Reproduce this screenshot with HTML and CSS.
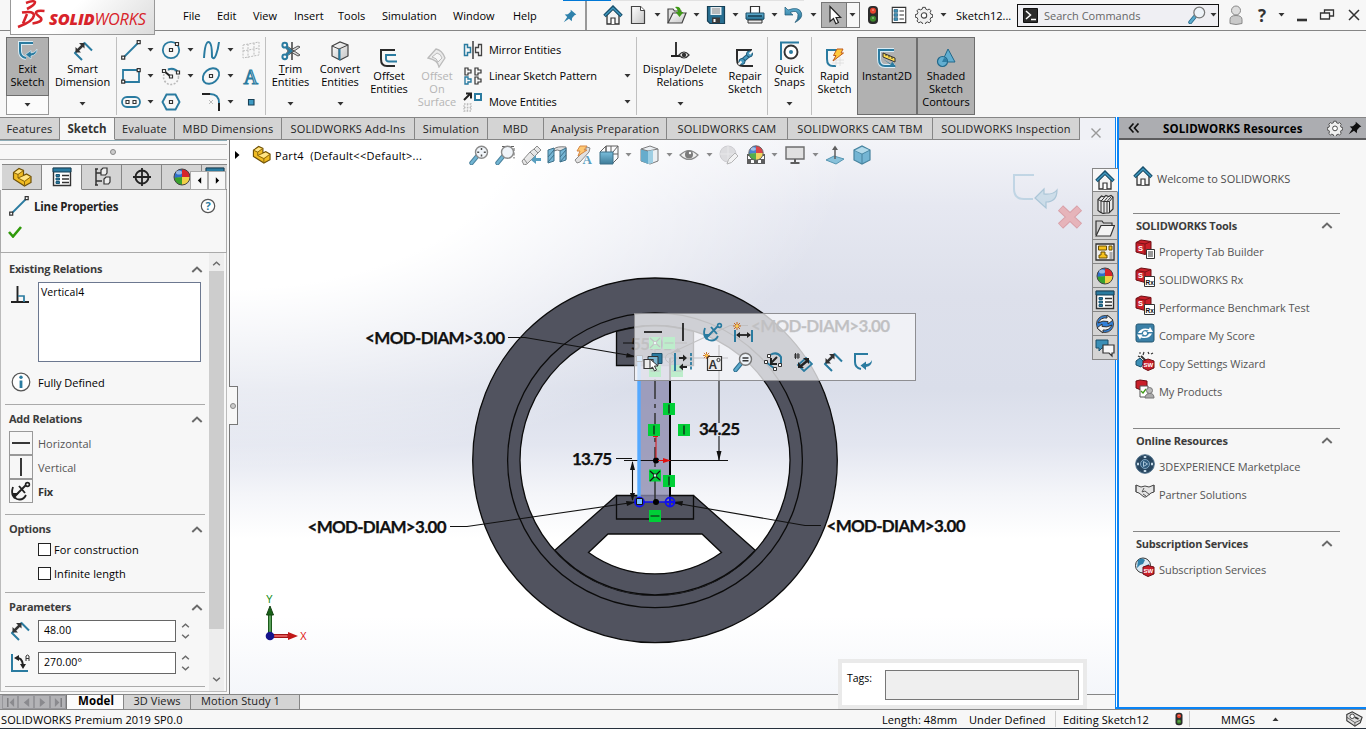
FILE: index.html
```html
<!DOCTYPE html>
<html lang="en">
<head>
<meta charset="utf-8">
<title>SOLIDWORKS Premium 2019</title>
<link rel="stylesheet" href="styles.css">
</head>
<body>
<svg class="defs" aria-hidden="true">
  <defs>
    <linearGradient id="gBlue" x1="0" y1="0" x2="0" y2="1"><stop offset="0" stop-color="#63b3d6"/><stop offset="1" stop-color="#1f6788"/></linearGradient>
    <linearGradient id="gGrey" x1="0" y1="0" x2="1" y2="1"><stop offset="0" stop-color="#fff"/><stop offset="1" stop-color="#c4c4c4"/></linearGradient>
    <clipPath id="ballClip"><circle cx="10" cy="10" r="8"/></clipPath>
  </defs>
  <symbol id="arr" viewBox="0 0 7 4"><path d="M.5 0h6L3.5 3.6z" fill="#333"/></symbol>
  <symbol id="chev" viewBox="0 0 12 7"><path d="M1.300 6L6 1.600 10.700 6" fill="none" stroke="#6a6a6a" stroke-width="2"/></symbol>
  <symbol id="home" viewBox="0 0 20 20"><path d="M4 10v9h12v-9l-6-6z" fill="#f4f4f4" stroke="#333" stroke-width="1.300"/><path d="M8 19v-6h4v6" fill="#fff" stroke="#333" stroke-width="1.200"/><path d="M1.500 11L10 2.500l8.500 8.500" fill="none" stroke="#174f6c" stroke-width="3.600"/><path d="M2 10.600L10 2.900l8 7.700" fill="none" stroke="#3f96bd" stroke-width="1.400"/></symbol>
  <symbol id="new" viewBox="0 0 20 20"><path d="M3.500 1.500h9l4 4v13h-13z" fill="url(#gGrey)" stroke="#444" stroke-width="1.200"/><path d="M12.500 1.500v4h4" fill="#fff" stroke="#444"/></symbol>
  <symbol id="open" viewBox="0 0 20 20"><path d="M1 18V4h5l1.500 2H14v3" fill="#ddd" stroke="#444" stroke-width="1.200"/><path d="M1 18L6 8h13l-4 10z" fill="url(#gGrey)" stroke="#444" stroke-width="1.200"/><path d="M8 2q6-1 6 5h2.500L12.500 12 8.500 7H11q0-3-3-5z" fill="#3f9a16"/></symbol>
  <symbol id="save" viewBox="0 0 20 20"><path d="M1.500 1.500h17v17H4l-2.500-2.500z" fill="#286f92" stroke="#163f55" stroke-width="1.200"/><path d="M4.500 2h11v8h-11z" fill="#e7eef2"/><path d="M6 4h8M6 6h8M6 8h8" stroke="#888"/><path d="M6 12.500h8V18H6z" fill="#3b3b3b"/><path d="M7.500 14h2v3h-2z" fill="#fff"/></symbol>
  <symbol id="print" viewBox="0 0 20 20"><path d="M5.500 1.500h9v7h-9z" fill="#fff" stroke="#333" stroke-width="1.200"/><path d="M1 8h18v6l-2 1H3l-2-1z" fill="url(#gBlue)" stroke="#1b4d66"/><path d="M3 15h14v3H3z" fill="#e9e9e9" stroke="#333"/><path d="M3 11h14" stroke="#153d50" stroke-width="1.500"/></symbol>
  <symbol id="undo" viewBox="0 0 20 20"><path d="M1 2v8h8L6 7.500q7-3 8 2 .5 4-3 8 8-4 6.500-9.500Q15 1 4 5z" fill="url(#gBlue)" stroke="#1d5876" stroke-width=".7"/></symbol>
  <symbol id="cursor" viewBox="0 0 20 20"><path d="M6 1.500v15l3.500-3 2.300 5.200 2.600-1.200-2.300-5h4.500z" fill="#fff" stroke="#222" stroke-width="1.200"/></symbol>
  <symbol id="light" viewBox="0 0 20 20"><rect x="5" y="1" width="10" height="18" rx="4" fill="#2c2c2c"/><circle cx="10" cy="5.800" r="3" fill="#e8432d"/><circle cx="10" cy="13.800" r="3" fill="#3e8a2c"/><path d="M9 5h2M9 13h2" stroke="#fff" opacity=".6"/></symbol>
  <symbol id="list" viewBox="0 0 20 20"><path d="M2.500 1.500h15v17h-15z" fill="#fff" stroke="#333" stroke-width="1.200"/><path d="M4.500 4h4v3h-4zm0 4.500h4v3h-4zm0 4.500h4v3h-4z" fill="#3f94ba" stroke="#1d5876" stroke-width=".8"/><path d="M10.500 5.500h5M10.500 10h5M10.500 14.500h5" stroke="#333" stroke-width="1.200"/></symbol>
  <symbol id="gear" viewBox="0 0 20 20"><path d="M8.500 1.500h3l.5 2 2 .8 1.800-1 2 2-1 1.900.8 1.900 2 .4v3l-2 .5-.8 1.900 1 1.800-2 2-1.800-1-2 .8-.5 2h-3l-.5-2-2-.8-1.800 1-2-2 1-1.800-.8-1.900-2-.5v-3l2-.4.8-1.900-1-1.900 2-2 1.800 1 2-.8z" fill="#f0f0f0" stroke="#444" stroke-width="1.100"/><circle cx="10" cy="10.500" r="3" fill="#fff" stroke="#444" stroke-width="1.200"/></symbol>
  <symbol id="pin" viewBox="0 0 20 20"><path d="M11 1l8 7-2.500 1L13 13l-.5 4.500-4-3.500L1 19l5-7.500L2.500 8 7 7.500l4-3.500z" fill="#2f82ac"/></symbol>
  <symbol id="mag" viewBox="0 0 20 20"><path d="M2.500 18l5-6" stroke="#2c6d8d" stroke-width="4.500" stroke-linecap="round"/><path d="M2.500 18l5-6" stroke="#5aa9cc" stroke-width="2.600" stroke-linecap="round"/><circle cx="12.500" cy="7.300" r="6" fill="#eef3f8" stroke="#777" stroke-width="1.400"/></symbol>
  <symbol id="user" viewBox="0 0 20 20"><path d="M4 18.500v-4q0-4 6-4t6 4v4q-6 2-12 0z" fill="#c9c9c9" stroke="#888"/><circle cx="10" cy="5.500" r="4.500" fill="#ddd" stroke="#888"/></symbol>
  <symbol id="exit" viewBox="0 0 20 20"><path d="M15 2H2v8q0 6 6 7" fill="none" stroke="#2a7ba0" stroke-width="2"/><path d="M19 8q0 6-6 7v3l-5.500-4.500L13 9.500v2.500q4 0 6-4z" fill="#2a7ba0"/></symbol>
  <symbol id="exitB" viewBox="0 0 20 20"><path d="M15 2H2v8q0 6 6 7" fill="none" stroke="#d9ecf5" stroke-width="4"/><path d="M15 2H2v8q0 6 6 7" fill="none" stroke="#2a7ba0" stroke-width="2"/><path d="M19 8q0 6-6 7v3l-5.500-4.500L13 9.500v2.500q4 0 6-4z" fill="#2a7ba0" stroke="#d9ecf5" stroke-width=".7"/></symbol>
  <symbol id="dim" viewBox="0 0 20 20"><path d="M1.500 11.500l7.500 7.500M11.500 2l7.500 7.500M1.500 12.500l2-2M10 3.500l2-2" fill="none" stroke="#2a7ba0" stroke-width="2"/><path d="M4 10l6-6" stroke="#333" stroke-width="2.500"/><path d="M2.500 11.500V6l5.500 5.500zM11.500 2v5.500L6 2z" fill="#333"/></symbol>
  <symbol id="line" viewBox="0 0 20 20"><path d="M2 18L18 2" stroke="#2a7ba0" stroke-width="1.800"/><path d="M.7 16.200h3v3h-3zM16.200.7h3v3h-3z" fill="#fff" stroke="#333" stroke-width="1.200"/></symbol>
  <symbol id="circ" viewBox="0 0 20 20"><circle cx="10" cy="10" r="8.200" fill="none" stroke="#2a7ba0" stroke-width="1.800"/><path d="M8.500 8.500h3v3h-3zM14.500 2.500h3v3h-3z" fill="#fff" stroke="#333" stroke-width="1.200"/></symbol>
  <symbol id="spline" viewBox="0 0 20 20"><path d="M3 18Q4 2 7.500 2T11 17q2 3 4-2T18 2" fill="none" stroke="#2a7ba0" stroke-width="2"/></symbol>
  <symbol id="gridp" viewBox="0 0 20 20"><path d="M2 5l16-3v13L2 18zM7 4v14M13 3v13M2 11l16-3" fill="none" stroke="#bbb" stroke-dasharray="2 1.200"/></symbol>
  <symbol id="rect" viewBox="0 0 20 20"><path d="M2 4h16v12H2z" fill="none" stroke="#2a7ba0" stroke-width="1.800"/><path d="M.7 14.200h3v3h-3zM16.200 2.700h3v3h-3z" fill="#fff" stroke="#333" stroke-width="1.200"/></symbol>
  <symbol id="arc" viewBox="0 0 20 20"><circle cx="10" cy="11" r="7.500" fill="none" stroke="#bbb" stroke-width="1.600" stroke-dasharray="2 1.500"/><path d="M7 3.500Q13 1 17 6" fill="none" stroke="#2a7ba0" stroke-width="1.900"/><path d="M3 5l6 5" fill="none" stroke="#222" stroke-width="2"/><path d="M8.500 9h3v3h-3zM1.500 3.500h3v3h-3zM15.500 5h3v3h-3z" fill="#fff" stroke="#333" stroke-width="1.200"/></symbol>
  <symbol id="ell" viewBox="0 0 20 20"><ellipse cx="10" cy="10" rx="9" ry="6.800" transform="rotate(-40 10 10)" fill="none" stroke="#2a7ba0" stroke-width="1.900"/><path d="M8.500 8.500h3v3h-3z" fill="#fff" stroke="#333" stroke-width="1.200"/></symbol>
  <symbol id="slot" viewBox="0 0 20 20"><rect x="1" y="5" width="18" height="10" rx="5" fill="none" stroke="#2a7ba0" stroke-width="1.800"/><path d="M5 8.500h3v3H5zM12 8.500h3v3h-3z" fill="#fff" stroke="#333" stroke-width="1.100"/></symbol>
  <symbol id="hex" viewBox="0 0 20 20"><path d="M5.500 2.500h9l4 7.500-4 7.500h-9L1.500 10z" fill="none" stroke="#2a7ba0" stroke-width="1.900"/><path d="M8.500 8.500h3v3h-3z" fill="#fff" stroke="#333" stroke-width="1.200"/></symbol>
  <symbol id="fillet" viewBox="0 0 20 20"><path d="M1 2h8M18 11v8" stroke="#222" stroke-width="2"/><path d="M9 2q9 0 9 9" fill="none" stroke="#2a7ba0" stroke-width="1.800"/><path d="M8 8l4 4M12 8l-4 4" stroke="#bbb"/></symbol>
  <symbol id="point" viewBox="0 0 20 20"><path d="M7.500 7.500h5.500V13H7.500z" fill="#3f9bc4" stroke="#173f55" stroke-width="1.100"/></symbol>
  <symbol id="trim" viewBox="0 0 20 20"><path d="M11 1v18" stroke="#222" stroke-width="1.300"/><path d="M6 5l13 9-2 1L6 9zM6 15l13-9-2-1L6 11z" fill="#d6d6d6" stroke="#444" stroke-width=".9"/><path d="M5 6l5 4-5 4" fill="none" stroke="#2a7ba0" stroke-width="2.400"/><circle cx="3.800" cy="4.200" r="2.400" fill="none" stroke="#2a7ba0" stroke-width="2"/><circle cx="3.800" cy="15.800" r="2.400" fill="none" stroke="#2a7ba0" stroke-width="2"/></symbol>
  <symbol id="cube" viewBox="0 0 20 20"><path d="M2 5l8-4 8 3v11l-8 4-8-4z" fill="url(#gGrey)" stroke="#444" stroke-width="1.200"/><path d="M2 5l7 3 9-4M9 8v11" fill="none" stroke="#444"/><path d="M9.500 8v11" stroke="#2a7ba0" stroke-width="2"/></symbol>
  <symbol id="offset" viewBox="0 0 20 20"><path d="M16 2H2v9q0 7 6 7h8" fill="none" stroke="#2b2b2b" stroke-width="2"/><path d="M17 7H7v4q0 2.500 3 2.500h8" fill="none" stroke="#2a7ba0" stroke-width="1.900"/></symbol>
  <symbol id="surf" viewBox="0 0 20 20"><path d="M1 10l8-9q6 1 9 9l-6 9q-1-7-11-9z" fill="#ececec" stroke="#bbb" stroke-width="1.300"/><path d="M5 9l5-4q4 1 5 5l-4 4q-1-4-6-5z" fill="#f7f7f7" stroke="#bbb"/></symbol>
  <symbol id="mirror" viewBox="0 0 20 20"><path d="M10 1v18" stroke="#222" stroke-width="1.300"/><path d="M1.500 4.500h3v3h3v5h-3v3h-3z" fill="none" stroke="#2a7ba0" stroke-width="1.500"/><path d="M18.500 4.500h-3v3h-3v5h3v3h3z" fill="none" stroke="#444" stroke-width="1.300"/></symbol>
  <symbol id="pattern" viewBox="0 0 20 20"><path d="M2 2h3v2h3v3H5v2H2zM12 2h3v2h3v3h-3v2h-3zM12 11h3v2h3v3h-3v2h-3z" fill="none" stroke="#333" stroke-width="1.200"/><path d="M2 11h3v2h3v3H5v2H2z" fill="none" stroke="#2a7ba0" stroke-width="1.400"/></symbol>
  <symbol id="move" viewBox="0 0 20 20"><path d="M1 8l6-6M3 1.500h5v5" fill="none" stroke="#222" stroke-width="2"/><path d="M12 2h6v6h-6z" fill="#fff" stroke="#2a7ba0" stroke-width="2"/><path d="M1 12h7v7H1zM1 15.500h7M4.500 12v7" fill="none" stroke="#bbb" stroke-width="1.300" stroke-dasharray="1.600 1.200"/></symbol>
  <symbol id="disp" viewBox="0 0 20 20"><path d="M6 1v14M1 15h9" stroke="#222" stroke-width="1.800"/><path d="M9 14q5-6 10 0-5 6-10 0z" fill="#eee" stroke="#333" stroke-width="1.200"/><circle cx="14" cy="14" r="2.200" fill="#333"/></symbol>
  <symbol id="repair" viewBox="0 0 20 20"><path d="M17 2H2v9q0 7 6 7h10" fill="none" stroke="#2b2b2b" stroke-width="2"/><path d="M7 13l7-6" stroke="#1d5876" stroke-width="4.500"/><path d="M7 13l7-6" stroke="#4a9bc0" stroke-width="2.500"/><circle cx="7" cy="13.500" r="3" fill="#4a9bc0" stroke="#1d5876"/><circle cx="14.500" cy="6" r="3" fill="#4a9bc0" stroke="#1d5876"/><path d="M14.500 6l3-3M6.500 13.500l-3 3" stroke="#f7f7f7" stroke-width="2"/></symbol>
  <symbol id="snap" viewBox="0 0 20 20"><path d="M1 19V1.500h18" fill="none" stroke="#2a7ba0" stroke-width="2"/><circle cx="11" cy="11" r="6.500" fill="#fff" stroke="#333" stroke-width="1.900"/><circle cx="11" cy="11" r="2" fill="#2a7ba0"/></symbol>
  <symbol id="rapid" viewBox="0 0 20 20"><path d="M12 2H2v9q0 7 6 7h3" fill="none" stroke="#2a7ba0" stroke-width="2"/><path d="M7 12h12M11 7v11M15 9v9M7 15h12" stroke="#ddd" stroke-width=".8"/><path d="M12 1h6l-2 4h2.500L8 13l3-5.500H8.500z" fill="#ffc93c" stroke="#c05a1a"/></symbol>
  <symbol id="inst" viewBox="0 0 20 20"><path d="M17 2H2v9q0 7 6 7h10" fill="none" stroke="#d9ecf5" stroke-width="4"/><path d="M17 2H2v9q0 7 6 7h10" fill="none" stroke="#2a7ba0" stroke-width="2"/><path d="M6 5l12 5v4L6 9z" fill="#ffdc4d" stroke="#333"/><path d="M9 6v2M12 7.500v2M15 9v2" stroke="#333"/><path d="M6 11l8 5 1-2.500 4 5-6 .5 1-2" fill="#2a7ba0"/></symbol>
  <symbol id="shade" viewBox="0 0 20 20"><path d="M12 1l7 13H6z" fill="#62aed0" stroke="#22688a"/><circle cx="6.500" cy="13.500" r="5" fill="#62aed0" stroke="#22688a" stroke-width="1.200"/><path d="M8 10l3 1v3H6z" fill="#2e7ea4"/></symbol>
  <symbol id="part" viewBox="0 0 20 20"><path d="M1.500 5.500L7 1.500l4.500 2v5l3-1.500 4.500 2.500v6l-6.500 3.500-11-7z" fill="#f0bb22" stroke="#6e5109" stroke-width="1.200"/><path d="M2.500 5.500L7 2.500 10.500 4 6 7zM7 11l7.500-3 3.500 2-5.500 3.500z" fill="#ffe587"/><path d="M1.500 5.500l4.500 2 5.500-4M6 7.500V11l6.500 3.500V19M12.500 14.500l6-4.500M6 11l5.500-2.500" fill="none" stroke="#8a670e"/></symbol>
  <symbol id="props" viewBox="0 0 20 20"><path d="M1.500 1.500h17v17h-17z" fill="#fff" stroke="#333" stroke-width="1.400"/><path d="M1 1h18v4H1z" fill="#2a7ba0" stroke="#163f55"/><path d="M4 7.500h3.500v2H4zM4 11h3.500v2H4zM4 14.500h3.500v2H4z" fill="#2a7ba0" stroke="#1d5876"/><path d="M10 8.500h7M10 12h7M10 15.500h7" stroke="#333" stroke-width="1.300"/></symbol>
  <symbol id="tree" viewBox="0 0 20 20"><path d="M3 2h3M3 18h3M4 2v16M4 6h6M4 14h6" stroke="#333" stroke-width="1.500" fill="none"/><path d="M9 3l2-2h4v5l-1.500 2H9zM12 12l2-2h4v5l-1.500 2H12z" fill="#eee" stroke="#333" stroke-width="1.200"/></symbol>
  <symbol id="target" viewBox="0 0 20 20"><circle cx="10" cy="10" r="6.500" fill="none" stroke="#222" stroke-width="1.900"/><path d="M10 1v18M1 10h18" stroke="#222" stroke-width="1.800"/></symbol>
  <symbol id="ball" viewBox="0 0 20 20"><g clip-path="url(#ballClip)"><path d="M0 0h10v10L0 12z" fill="#2e6ecb"/><path d="M10 0h10v10H10z" fill="#d7262b"/><path d="M0 11l10-1v10H0z" fill="#39a12c"/><path d="M10 10h10v10H10z" fill="#f0cf46"/></g><circle cx="10" cy="10" r="8" fill="none" stroke="#444"/><ellipse cx="7" cy="5.500" rx="3" ry="2" fill="#fff" opacity=".5"/></symbol>
  <symbol id="scene" viewBox="0 0 20 20"><path d="M1 9h18v10H1z" fill="#444"/><path d="M2 11h4v3H2zM14 11h4v3h-4zM5 15h3v3H5zM12 15h3v3h-3z" fill="#fff"/><use href="#ball" x="1" y="-1" width="18" height="18"/></symbol>
  <symbol id="perp" viewBox="0 0 20 20"><path d="M7.500 1v16M1 17h18" stroke="#222" stroke-width="1.900"/><path d="M8 11h6v6" fill="none" stroke="#2a7ba0" stroke-width="1.700"/></symbol>
  <symbol id="fix" viewBox="0 0 20 20"><path d="M5 14L15 4M8 5l6 7" stroke="currentColor" stroke-width="1.900"/><circle cx="16.500" cy="3.500" r="1.900" fill="none" stroke="currentColor" stroke-width="1.600"/><path d="M2 6q-3 9 4 12 6 2 9-4" fill="none" stroke="currentColor" stroke-width="1.800"/><path d="M1 12h7l-5 6z" fill="currentColor"/></symbol>
  <symbol id="ang" viewBox="0 0 20 20"><path d="M2 1v17h16" fill="none" stroke="#2a7ba0" stroke-width="2"/><path d="M6 5q6-1 7 7" fill="none" stroke="#222" stroke-width="2"/><path d="M4 5l5-3v6zM10 11h6l-3 5z" fill="#222"/><path d="M16 8V3q1.500-2 3 0v5M16 5.500h3" fill="none" stroke="#333"/></symbol>
  <symbol id="zoomfit" viewBox="0 0 20 20"><use href="#mag"/><path d="M12.500 3v2M12.500 9.600v2M8.200 7.300h2M14.800 7.300h2" stroke="#333" stroke-width="1.500"/></symbol>
  <symbol id="zoomarea" viewBox="0 0 20 20"><path d="M7 1.500h12v12" fill="none" stroke="#444" stroke-dasharray="3 1.500"/><use href="#mag"/></symbol>
  <symbol id="prev" viewBox="0 0 20 20"><path d="M1 16l8-9 4-3 3-3 4 4-3 3-3 3-8 8-3 1z" fill="url(#gGrey)" stroke="#777"/><path d="M9 7l4 4M13 4l4 4M3 14l3 4" stroke="#777"/><path d="M20 13h-5v-3l-5 5 5 4v-3h5z" fill="#3d8fb5"/></symbol>
  <symbol id="section" viewBox="0 0 20 20"><path d="M7 4q3-3 12-2v12l-5 1V6q-4-2-7 0z" fill="#ddd" stroke="#666"/><path d="M1 5l6-2v13l-6 2zM13 6l6-3v12l-6 2z" fill="#5faace" stroke="#1d5876"/><path d="M1 12l6-7M1 17l6-7M13 12l6-7M13 17l6-7" stroke="#1d5876"/></symbol>
  <symbol id="dynann" viewBox="0 0 20 20"><path d="M2 15L12 5l2-3 3 1-1 4-9 10-3 1z" fill="#ddd" stroke="#777"/><path d="M7 1h7l-3 4h3l-9 6 2-5H4z" fill="#ffc05a" stroke="#cf7427"/></symbol>
  <symbol id="orient" viewBox="0 0 20 20"><path d="M7 1h12v12M7 1v6M1 7l6-6M19 1l-5 6M19 13l-5 5M7 7V1M12 1v6M14 9h5" fill="none" stroke="#444"/><path d="M1 7h13v12H1z" fill="url(#gBlue)" stroke="#1d5876"/></symbol>
  <symbol id="style" viewBox="0 0 20 20"><path d="M2 4l9-3 8 3v12l-8 3-9-3z" fill="#e8eef2" stroke="#666"/><path d="M2 4l7 2v13l-7-3z" fill="#4d9fc4"/><path d="M2 4l7 2 10-2" fill="none" stroke="#666"/><path d="M9 6l5-1v13l-5 1z" fill="#8fc7df"/></symbol>
  <symbol id="eye" viewBox="0 0 20 20"><path d="M1 10q9-9 18 0-9 9-18 0z" fill="#eee" stroke="#777" stroke-width="1.200"/><circle cx="10" cy="9.500" r="4" fill="#666"/><circle cx="11" cy="8" r="1.200" fill="#fff"/></symbol>
  <symbol id="apped" viewBox="0 0 20 20"><circle cx="9" cy="9" r="8" fill="#d8d8db" stroke="#c8c8cc"/><path d="M9 1v16M1 9h16" stroke="#e6e6e8"/><path d="M8 19l1.500-4.500L16 8l3 3-6.500 6.500z" fill="#f2f2f2" stroke="#a8a8a8"/></symbol>
  <symbol id="monitor" viewBox="0 0 20 20"><path d="M1 2h18v12H1z" fill="#ddd" stroke="#555" stroke-width="1.400"/><path d="M10 14v3M5.500 18h9" stroke="#444" stroke-width="2"/></symbol>
  <symbol id="normal" viewBox="0 0 20 20"><path d="M1 15l8-4 10 3-8 5z" fill="#77b9d6" stroke="#3c86a6"/><path d="M10 14V3" stroke="#444" stroke-width="1.500"/><path d="M7 5l3-4.500L13 5z" fill="#444"/></symbol>
  <symbol id="bcube" viewBox="0 0 20 20"><path d="M2 5l8-4 8 4v10l-8 4-8-4z" fill="#5fabce" stroke="#2a7190" stroke-width="1.200"/><path d="M2 5l8 4 8-4M10 9v10" fill="none" stroke="#2a7190"/><path d="M3 5.500l7-3.500 7 3-7 3.500z" fill="#a9d6e8"/></symbol>
  <symbol id="books" viewBox="0 0 20 20"><path d="M3 5.500l3.500-3.500 2.500 1 2-1.500 2.500 1L16 1.500l2 1.500v12l-4 4h-3l-3 .5L5 18l-2-1.500z" fill="#e8e8e8" stroke="#333" stroke-width="1.200"/><path d="M3 5.500L6 7v11.500M6 7l3.500-3.500M9 19V7.500l3.500-4M9 7.500L6 7M12 18.500V7.500l-3 0M12 7.500l4-4.500M14.500 18.500V7.500H12M14.500 7.500L18 3" fill="none" stroke="#333"/></symbol>
  <symbol id="folder" viewBox="0 0 20 20"><path d="M1 17V3h6l1.500 2H17v3" fill="#ccc" stroke="#333" stroke-width="1.200"/><path d="M1 18L6 7.500h13.500L15.500 18z" fill="#f3f3f3" stroke="#333" stroke-width="1.200"/></symbol>
  <symbol id="palette" viewBox="0 0 20 20"><path d="M1 2h18v16H1z" fill="#eee" stroke="#333" stroke-width="1.300"/><path d="M3.500 4h8v4h-8zM14 4h3v4h-3zM6 10h4v3h2v3H4v-3h2z" fill="#f6c21e" stroke="#6b4e00"/><path d="M14.500 10h3v7h-3z" fill="#aaa"/></symbol>
  <symbol id="sync" viewBox="0 0 20 20"><circle cx="10" cy="10" r="8.500" fill="#3180d8" stroke="#444"/><path d="M3 9q3-6 9-5V1l6 5-5 4V7.500Q8 6 3 9zM17 11q-3 6-9 5v3l-6-5 5-4v2.500q5 1.500 10-1.500z" fill="#f2f2f2" stroke="#333"/></symbol>
  <symbol id="chat" viewBox="0 0 20 20"><path d="M1 2h12v8H7l-3 3v-3H1z" fill="#3b8fb6" stroke="#1b4d66"/><path d="M8 7h11v8h-2v3l-3-3H8z" fill="#f7f7f7" stroke="#333" stroke-width="1.200"/></symbol>
  <symbol id="sw" viewBox="0 0 20 20"><path d="M1 3.500L6 1l10 1.500v10l-6 3-9-2.500z" fill="#c9202a" stroke="#6b0d12"/><path d="M1 3.500L10 5l6-2.500M10 5v10" fill="none" stroke="#7d1217"/></symbol>
  <symbol id="page" viewBox="0 0 20 20"><path d="M11.500 10.500h8v9h-8z" fill="#fff" stroke="#333"/><path d="M13 13h5M13 15h5M13 17h5" stroke="#333"/></symbol>
  <symbol id="sheet" viewBox="0 0 20 20"><path d="M9.500 9.500h10v10h-10z" fill="#fff" stroke="#333"/></symbol>
  <symbol id="score" viewBox="0 0 20 20"><rect x="1" y="1" width="18" height="18" rx="2" fill="#3a7fa6" stroke="#245872"/><path d="M3 10q3-6 11-4l1-2 3 5h-6l1.500-1.500Q8 6 6.500 10M17 10.500q-3 6-11 4l-1 2-3-5h6l-1.500 1.500Q12 15 14 10.500" fill="#fff"/><circle cx="10" cy="10.200" r="2" fill="#fff"/></symbol>
  <symbol id="wizard" viewBox="0 0 20 20"><path d="M4 2h2M8 4l1-3M13 1l1 2M16 3l2-1M3 5l2 1" stroke="#333" stroke-width="1.200"/><path d="M6 5l7 7" stroke="#333" stroke-width="2"/><path d="M1 10l4-3 4 4-3 5-5-2z" fill="#3b8fb6" stroke="#1b4d66"/><path d="M8 10l5-2 6 2v7l-6 2.500L8 17z" fill="#c9202a" stroke="#6b0d12"/></symbol>
  <symbol id="myprod" viewBox="0 0 20 20"><path d="M1 2l4-1 7 1v8l-6 1-5-2z" fill="#c9202a" stroke="#6b0d12"/><path d="M5 7h8v11H5z" fill="#fff" stroke="#555"/><path d="M6 12l2 2 3-4" fill="none" stroke="#3f9a16" stroke-width="1.300"/><path d="M10 19q0-4 4.500-4.500T19 19z" fill="#aaa" stroke="#777"/><circle cx="14.500" cy="11.500" r="3" fill="#bbb" stroke="#777"/></symbol>
  <symbol id="compass" viewBox="0 0 20 20"><circle cx="10" cy="10" r="9.300" fill="#28465f" stroke="#4b6d88"/><circle cx="10" cy="10" r="4.500" fill="#2f5b7d" stroke="#7fa4c0"/><path d="M8.500 7.500l4 2.500-4 2.500z" fill="none" stroke="#a9c6da"/><path d="M10 2v2M10 16v2M2 10h2M16 10h2" stroke="#c3d8e6" stroke-width="2.500"/></symbol>
  <symbol id="hands" viewBox="0 0 20 20"><path d="M1 3l5 2 4-1 4 1 5-2v7l-3 1-5 4H9l-5-4-3-1z" fill="#e5e5e5" stroke="#444"/><path d="M9 6l-2 4 3-1 5 4M8 12l3 2M1 3v7M19 3v7" fill="none" stroke="#555"/></symbol>
  <symbol id="globe" viewBox="0 0 20 20"><circle cx="8" cy="8.500" r="7.500" fill="#dce9f2" stroke="#333"/><path d="M3 3q4-3 7 0l-2 4-3 1-3 3zM10 9l4-2v4l-4 2z" fill="#2f81ab"/><path d="M8 10l5-1.500 6 1.500v7l-6 2.500L8 17z" fill="#c9202a" stroke="#6b0d12"/></symbol>
  <symbol id="tagp" viewBox="0 0 20 20"><path d="M2 5l6-3 11 6-2 6-6 4-9-6z" fill="#ddd" stroke="#333" stroke-width="1.200"/><path d="M2 8l9 6 7-3M11 14v4" fill="none" stroke="#555"/><circle cx="8" cy="7" r="2.500" fill="#fff" stroke="#333"/><path d="M11 8l4 2" stroke="#333" stroke-width="2"/></symbol>
  <symbol id="hbar" viewBox="0 0 20 20"><path d="M1 10h18" stroke="#222" stroke-width="1.800"/></symbol>
  <symbol id="vbar" viewBox="0 0 20 20"><path d="M10 1v18" stroke="#222" stroke-width="1.800"/></symbol>
  <symbol id="spark" viewBox="0 0 8 8"><path d="M4 0v8M0 4h8M1 1l6 6M7 1L1 7" stroke="#c8661c"/><circle cx="4" cy="4" r="1.500" fill="#ffd04a"/></symbol>
  <symbol id="hdim" viewBox="0 0 20 20"><path d="M2 8v12M19 8v12" stroke="#2a7ba0" stroke-width="2"/><path d="M4 13h13" stroke="#222" stroke-width="1.800"/><path d="M3 13l4-3v6zM18 13l-4-3v6z" fill="#222"/><use href="#spark" width="8" height="8"/></symbol>
  <symbol id="selot" viewBox="0 0 20 20"><path d="M9 1.500h10v10H9z" fill="#2a7ba0" stroke="#1d4f68"/><path d="M5 4.500h10v9H5z" fill="#7db7d2" stroke="#333"/><path d="M1 7.500h9v9H1z" fill="#ececec" stroke="#333" stroke-width="1.200"/><path d="M7 7v10l2.500-2 2 4 2-1-2-4h3.500z" fill="#fff" stroke="#333"/></symbol>
  <symbol id="sym" viewBox="0 0 20 20"><path d="M2 1v18" stroke="#2a7ba0" stroke-width="2"/><path d="M18 1v18" stroke="#2a7ba0" stroke-width="1.800" stroke-dasharray="3 1.500"/><path d="M6 6h5M9 15h5" stroke="#222" stroke-width="2"/><path d="M10 2.500v7L14 6zM10 11.500v7L6 15z" fill="#222"/></symbol>
  <symbol id="note" viewBox="0 0 20 20"><path d="M4.500 4.500h14v14h-14z" fill="#eee" stroke="#333" stroke-width="1.200"/><circle cx="15.500" cy="8" r="1.600" fill="none" stroke="#333"/><use href="#spark" width="7" height="7"/></symbol>
  <symbol id="magl" viewBox="0 0 20 20"><use href="#mag"/><path d="M9.500 6h6M9.500 8.800h6" stroke="#333" stroke-width="1.600"/></symbol>
  <symbol id="repl" viewBox="0 0 20 20"><path d="M7 3q7-4 11 2v7M3 10l9 7" fill="none" stroke="#2a7ba0" stroke-width="2"/><path d="M8 11l6-6M8 6v6h6" fill="none" stroke="#222" stroke-width="2"/><path d="M4.500 2.500h3v3h-3zM1.500 8.500h3v3h-3zM15.500 11.500h3v3h-3zM10.500 15.500h3v3h-3z" fill="#fff" stroke="#333"/></symbol>
  <symbol id="fulld" viewBox="0 0 20 20"><path d="M5 13l8-7 6 6-8 7z" fill="none" stroke="#2a7ba0" stroke-width="1.800"/><path d="M8 14l6-5" stroke="#222" stroke-width="2.400"/><path d="M5 10v6h6zM16 12V6h-6z" fill="#222"/><path d="M2.500 1v6M5 1v6M1 3h6M1 5h6" stroke="#222" stroke-width=".9"/></symbol>
</svg>

<div class="app">
  <header class="titlebar">
    <div class="logo">
      <svg class="ds" viewBox="0 0 30 30"><path d="M10 3q8-3 9-1 0 3-8 7"/><path d="M6 12.500q12-2 12 3-1 6-16 11.500M11 14L7 23.500"/><path d="M28.500 11q-8.500-1-8.500 2 0 1 5 5 2 4-8.500 5.500"/></svg>
      <span class="word"><b>SOLID</b>WORKS</span>
    </div>
    <i class="load"></i>
    <nav class="menu"><span>File</span><span>Edit</span><span>View</span><span>Insert</span><span>Tools</span><span>Simulation</span><span>Window</span><span>Help</span><svg class="s14"><use href="#pin"/></svg></nav>
    <div class="qat">
      <svg><use href="#home"/></svg><svg><use href="#new"/></svg><svg class="ar"><use href="#arr"/></svg>
      <svg><use href="#open"/></svg><svg class="ar"><use href="#arr"/></svg>
      <svg><use href="#save"/></svg><svg class="ar"><use href="#arr"/></svg>
      <svg><use href="#print"/></svg><svg class="ar"><use href="#arr"/></svg>
      <svg><use href="#undo"/></svg><svg class="ar"><use href="#arr"/></svg>
      <div class="pick"><span><svg><use href="#cursor"/></svg></span><svg class="ar"><use href="#arr"/></svg></div>
      <svg><use href="#light"/></svg><svg class="s18"><use href="#list"/></svg><svg class="s18"><use href="#gear"/></svg><svg class="ar"><use href="#arr"/></svg>
    </div>
    <span class="doc">Sketch12...</span>
    <div class="search"><svg class="term" viewBox="0 0 15 15"><path d="M.5.5h14v14H.5z" fill="#2b2b2b" stroke="#111"/><path d="M3 3l4.500 4L3 11M8 11.500h5" fill="none" stroke="#fff" stroke-width="1.500"/></svg><span>Search Commands</span><svg class="s18"><use href="#mag"/></svg><svg class="ar"><use href="#arr"/></svg></div>
    <div class="win">
      <svg><use href="#user"/></svg><b class="q">?</b><svg class="ar"><use href="#arr"/></svg>
      <svg class="s16" viewBox="0 0 16 16"><path d="M3 13h10" stroke="#333" stroke-width="2.600"/></svg>
      <svg class="s16" viewBox="0 0 16 16"><path d="M5.500 6V3h9v6h-4M1.500 6h9v6h-9z" fill="none" stroke="#333" stroke-width="1.300"/></svg>
      <svg class="s16" viewBox="0 0 16 16"><path d="M3 3l10 10M13 3L3 13" stroke="#333" stroke-width="1.500"/></svg>
    </div>
  </header>

  <section class="ribbon">
    <div class="exitbtn"><div class="btn on"><svg><use href="#exitB"/></svg><span>Exit<br>Sketch</span></div><div class="drop"><svg class="ar"><use href="#arr"/></svg></div></div>
    <div class="btn sep"><svg><use href="#dim"/></svg><span>Smart<br>Dimension</span><svg class="ar dn"><use href="#arr"/></svg></div>
    <div class="tools sep">
      <svg><use href="#line"/></svg><svg class="ar"><use href="#arr"/></svg><svg><use href="#circ"/></svg><svg class="ar"><use href="#arr"/></svg><svg><use href="#spline"/></svg><svg class="ar"><use href="#arr"/></svg><svg><use href="#gridp"/></svg>
      <svg><use href="#rect"/></svg><svg class="ar"><use href="#arr"/></svg><svg><use href="#arc"/></svg><svg class="ar"><use href="#arr"/></svg><svg><use href="#ell"/></svg><svg class="ar"><use href="#arr"/></svg><svg viewBox="0 0 20 20"><text x="2.500" y="17.500" class="bigA">A</text></svg>
      <svg><use href="#slot"/></svg><svg class="ar"><use href="#arr"/></svg><svg><use href="#hex"/></svg><i></i><svg><use href="#fillet"/></svg><svg class="ar"><use href="#arr"/></svg><svg><use href="#point"/></svg>
    </div>
    <div class="btn"><svg><use href="#trim"/></svg><span><u>T</u>rim<br>Entities</span><svg class="ar dn"><use href="#arr"/></svg></div>
    <div class="btn"><svg><use href="#cube"/></svg><span>Convert<br>Entities</span><svg class="ar dn"><use href="#arr"/></svg></div>
    <div class="btn low"><svg><use href="#offset"/></svg><span>Offset<br>Entities</span></div>
    <div class="btn low dis"><svg><use href="#surf"/></svg><span>Offset<br>On<br>Surface</span></div>
    <div class="rows sep">
      <svg><use href="#mirror"/></svg><span>Mirror Entities</span><i></i>
      <svg><use href="#pattern"/></svg><span>Linear Sketch Pattern</span><svg class="ar"><use href="#arr"/></svg>
      <svg><use href="#move"/></svg><span>Move Entities</span><svg class="ar"><use href="#arr"/></svg>
    </div>
    <div class="btn"><svg><use href="#disp"/></svg><span>Display/Delete<br>Relations</span><svg class="ar dn"><use href="#arr"/></svg></div>
    <div class="btn low sep"><svg><use href="#repair"/></svg><span>Repair<br>Sketch</span></div>
    <div class="btn sep"><svg><use href="#snap"/></svg><span>Quick<br>Snaps</span><svg class="ar dn"><use href="#arr"/></svg></div>
    <div class="btn low"><svg><use href="#rapid"/></svg><span>Rapid<br>Sketch</span></div>
    <div class="btn low on"><svg><use href="#inst"/></svg><span>Instant2D</span></div>
    <div class="btn low on"><svg><use href="#shade"/></svg><span>Shaded<br>Sketch<br>Contours</span></div>
  </section>

  <main class="main">
    <div class="left">
      <div class="tabs"><span>Features</span><span class="act">Sketch</span><span>Evaluate</span><span>MBD Dimensions</span><span>SOLIDWORKS Add-Ins</span><span>Simulation</span><span>MBD</span><span>Analysis Preparation</span><span>SOLIDWORKS CAM</span><span>SOLIDWORKS CAM TBM</span><span>SOLIDWORKS Inspection</span><div class="tabx"><svg viewBox="0 0 12 12"><path d="M1.500 1.500l9 9M10.500 1.500l-9 9" stroke="#999" stroke-width="1.400"/></svg></div></div>
      <div class="work">
        <aside class="panel">
          <div class="grip"><i></i></div>
          <div class="ptabs">
            <span><svg><use href="#part"/></svg></span><span class="act"><svg><use href="#props"/></svg></span><span><svg><use href="#tree"/></svg></span><span><svg><use href="#target"/></svg></span><span><svg><use href="#ball"/></svg></span><span class="cut"><svg><use href="#props"/></svg></span>
            <div class="pscroll"><b><svg viewBox="0 0 6 8"><path d="M5 0v8L1 4z"/></svg></b><b><svg viewBox="0 0 6 8"><path d="M1 0v8l4-4z"/></svg></b></div>
          </div>
          <div class="phead">
            <svg><use href="#line"/></svg><b>Line Properties</b>
            <svg class="s16" viewBox="0 0 16 16"><circle cx="8" cy="8" r="6.700" fill="#fff" stroke="#555" stroke-width="1.200"/><text x="8" y="12" text-anchor="middle" class="help">?</text></svg>
            <svg class="ok" viewBox="0 0 14 12"><path d="M1 6l4 4.500L13 1" fill="none" stroke="#2f9a0a" stroke-width="2.600"/></svg>
          </div>
          <div class="pbody">
            <div class="groups">
              <section class="g1"><h4>Existing Relations<svg><use href="#chev"/></svg></h4>
                <div class="rel"><svg><use href="#perp"/></svg><div class="lb">Vertical4</div></div>
                <div class="info"><svg viewBox="0 0 20 20"><circle cx="10" cy="10" r="8.800" fill="#fff" stroke="#555" stroke-width="1.200"/><path d="M10 8.500V16" stroke="#2a7ba0" stroke-width="2.800"/><circle cx="10" cy="5.200" r="1.700" fill="#2a7ba0"/></svg>Fully Defined</div>
              </section>
              <section class="g2"><h4>Add Relations<svg><use href="#chev"/></svg></h4>
                <div class="opt"><i><svg><use href="#hbar"/></svg></i>Horizontal</div>
                <div class="opt"><i><svg><use href="#vbar"/></svg></i>Vertical</div>
                <div class="opt"><i><svg><use href="#fix"/></svg></i><b>Fix</b></div>
              </section>
              <section class="g3"><h4>Options<svg><use href="#chev"/></svg></h4>
                <div class="chk"><i></i>For construction</div><div class="chk"><i></i>Infinite length</div>
              </section>
              <section class="g4"><h4>Parameters<svg><use href="#chev"/></svg></h4>
                <div class="num"><svg><use href="#dim"/></svg><span>48.00</span><em><svg><use href="#chev"/></svg><svg class="flip"><use href="#chev"/></svg></em></div>
                <div class="num"><svg><use href="#ang"/></svg><span>270.00°</span><em><svg><use href="#chev"/></svg><svg class="flip"><use href="#chev"/></svg></em></div>
              </section>
            </div>
            <div class="sbar"><svg><use href="#chev"/></svg><i></i><svg class="flip"><use href="#chev"/></svg></div>
          </div>
        </aside>
        <div class="view">
          <svg class="model" viewBox="230 140 885 554">
            <g fill="#51535f" stroke="#0b0b0b" stroke-width="1.300">
              <path fill-rule="evenodd" d="M472.700 460.300a182.300 182.300 0 1 0 364.600 0a182.300 182.300 0 1 0 -364.600 0zM520 460.300a135 135 0 1 0 270 0a135 135 0 1 0 -270 0z"/>
              <circle cx="655" cy="460.300" r="147.400" fill="none"/>
              <path fill-rule="evenodd" stroke="none" d="M554.500 550.500L616.500 495.500H693.500L755.500 550.500A135 135 0 0 1 554.500 550.500zM608 534H702L721.500 552.500A113.500 113.500 0 0 1 588.500 552.500z"/>
              <path fill="none" d="M554.500 550.500L616.500 495.500M693.500 495.500L755.500 550.500M608 534H702L721.500 552.500A114 114 0 0 1 588.500 552.500z"/>
              <path d="M555 550.500A135 135 0 0 0 755 550.500" fill="none"/>
              <path d="M616.500 495.500h77v23.500h-77z"/>
              <path d="M616.500 331.500A135 135 0 0 1 693.500 331.500V365.500H616.500z"/>
            </g>
            <path d="M640 358h30v144h-30z" fill="#8c8aae" opacity=".78"/>
            <path d="M655 345V502" stroke="#333" stroke-width="1.500" stroke-dasharray="20 5 4 5"/>
            <path d="M670 358V502" stroke="#000" stroke-width="2"/>
            <path d="M640 502h30" stroke="#1010e8" stroke-width="1.500"/>
            <g fill="none" stroke="#111" stroke-width="1.100">
              <path d="M624 460.500h104M719 345v78M719 436v24M616 458.500h16M632.500 462v38M508 337.500h17L636 356.500M450 526.500h17L636 502M821 525.500h-16L672 502.500M748 325.500h-18L671 353M670 358h58M670 347v-6M623 343h15M675 343h12"/>
            </g>
            <g fill="#111"><path d="M719 461l-2.500-10h5zM632.500 461l-2.500 9h5zM632.500 501l-2.500-8h5zM636 357l-9-4-1 4.500zM636 502l-10-1 1 5zM673 502l10-1-1 5zM671 353l10-1-3-4z"/></g>
            <path d="M639 358V502" stroke="#55a9ff" stroke-width="3.400"/>
            <g fill="none" stroke="#1010f0" stroke-width="1.800"><circle cx="639.500" cy="502" r="4.500"/><circle cx="670" cy="502" r="4.500"/><path d="M665 502h10M670 497v10"/></g>
            <path d="M636.500 498.500h6v6h-6z" fill="#7cc0ff" stroke="#111"/><path d="M636.500 355.500h6v6h-6z" fill="#7cc0ff" stroke="#111"/>
            <circle cx="656" cy="502" r="3"/><circle cx="656" cy="460.500" r="3"/><circle cx="670" cy="358" r="4.500" fill="none" stroke="#111"/>
            <path d="M656 458V436M653 436.500h5M658 460.500h5" stroke="#e01010" fill="none"/><path d="M663 458l8 2.500-8 2.500z" fill="#e01010"/>
            <text x="631" y="350" class="dt" textLength="41">55.01</text>
            <g fill="#00cf37"><path d="M663 403h12v12h-12zM648 424h12v12h-12zM678 424h12v12h-12zM663 475h12v12h-12zM649 469.500h12v12h-12zM649 510h12v12h-12zM649 337h12v12h-12zM663 337h12v12h-12zM649 365h12v12h-12zM671 365h12v12h-12z"/></g>
            <path d="M669 404.500v9M654 425.500v9M684 425.500v9M669 476.500v9M650.500 516h9M664.500 343h9M650 481l10-10M650 471l10 9M650 348l10-10M650 338l10 9M650.500 371h9M672.500 371h9" stroke="#111" stroke-width="1.200"/>
            <path d="M653.500 474h3v3h-3zM653.500 341.500h3v3h-3z" fill="#cfe" stroke="#111" stroke-width=".7"/>
            <text x="365" y="343.500" class="dt" textLength="140">&lt;MOD-DIAM&gt;3.00</text>
            <text x="307.500" y="532.500" class="dt" textLength="139">&lt;MOD-DIAM&gt;3.00</text>
            <text x="826.500" y="531.500" class="dt" textLength="139">&lt;MOD-DIAM&gt;3.00</text>
            <text x="751" y="331.500" class="dt" textLength="139">&lt;MOD-DIAM&gt;3.00</text>
            <text x="699" y="434.500" class="dt" textLength="41">34.25</text>
            <text x="572" y="464.500" class="dt" textLength="40">13.75</text>
            <path d="M268.500 636V612h3v24z" fill="#5aa05a" stroke="#1b5a1b"/><path d="M266.500 615l3.500-9 3.500 9z" fill="#176317" stroke="#174417"/>
            <path d="M270 634.500h18v3h-18z" fill="#e05a5a" stroke="#a01515"/><path d="M288 632l10 4-10 4z" fill="#c01818"/><circle cx="270" cy="636" r="4.300" fill="#14148c"/>
            <text x="266" y="603" class="ax" fill="#118a11">Y</text><text x="300" y="639.500" class="ax" fill="#e01515">X</text>
            <g opacity=".55"><path d="M1034 175h-20v14q0 10 10 10h9" fill="none" stroke="#9fc3d8" stroke-width="2"/><path d="M1057 190q0 12-11 12v6l-11-10 9-9v5q9 1 13-4z" fill="#b7d3e2" stroke="#7aa9c2" stroke-width="1.200"/></g>
            <path d="M1060.500 208l19 18M1079.500 208l-19 18" stroke="#d9a0a8" stroke-width="7.500"/><path d="M1061 208.500l18 17M1079 208.500l-18 17" stroke="#e6b4ba" stroke-width="5.500"/>
          </svg>
          <div class="crumb"><svg class="tri" viewBox="0 0 5 8"><path d="M0 0l4.500 4L0 8z"/></svg><svg><use href="#part"/></svg><span>Part4&nbsp; (Default&lt;&lt;Default&gt;...</span></div>
          <div class="hud">
            <svg><use href="#zoomfit"/></svg><svg><use href="#zoomarea"/></svg><svg><use href="#prev"/></svg><svg><use href="#section"/></svg><svg viewBox="0 0 20 20"><use href="#dynann"/><text x="9.500" y="18.500" class="smA">A</text></svg><svg><use href="#orient"/></svg><svg class="ar"><use href="#arr"/></svg><svg><use href="#style"/></svg><svg class="ar"><use href="#arr"/></svg><svg><use href="#eye"/></svg><svg class="ar"><use href="#arr"/></svg><svg><use href="#apped"/></svg><svg><use href="#scene"/></svg><svg class="ar"><use href="#arr"/></svg><svg><use href="#monitor"/></svg><svg class="ar"><use href="#arr"/></svg><svg><use href="#normal"/></svg><svg><use href="#bcube"/></svg>
          </div>
          <div class="ctx">
            <svg><use href="#hbar"/></svg><svg><use href="#vbar"/></svg><svg class="bl"><use href="#fix"/></svg><svg><use href="#hdim"/></svg><i></i><i></i><i></i><i></i>
            <svg><use href="#selot"/></svg><svg><use href="#sym"/></svg><svg viewBox="0 0 20 20"><use href="#note"/><text x="5.500" y="16.500" class="gl ga">A</text></svg><svg><use href="#magl"/></svg><svg><use href="#repl"/></svg><svg><use href="#fulld"/></svg><svg><use href="#dim"/></svg><svg><use href="#exit"/></svg>
          </div>
          <div class="handle"><i></i></div>
          <div class="tags"><span>Tags:</span><i></i></div>
          <div class="side"><span class="act"><svg><use href="#home"/></svg></span><span><svg><use href="#books"/></svg></span><span><svg><use href="#folder"/></svg></span><span><svg><use href="#palette"/></svg></span><span><svg><use href="#ball"/></svg></span><span><svg><use href="#props"/></svg></span><span><svg><use href="#sync"/></svg></span><span><svg><use href="#chat"/></svg></span></div>
        </div>
      </div>
      <div class="btabs">
        <div class="navs"><b><svg viewBox="0 0 10 10"><path d="M2 0v10" stroke="#77777b" stroke-width="1.500"/><path d="M9 0v10L4 5z"/></svg></b><b><svg viewBox="0 0 10 10"><path d="M8 0v10L2 5z"/></svg></b><b><svg viewBox="0 0 10 10"><path d="M2 0v10l6-5z"/></svg></b><b><svg viewBox="0 0 10 10"><path d="M8 0v10" stroke="#77777b" stroke-width="1.500"/><path d="M1 0v10l5-5z"/></svg></b></div>
        <span class="act">Model</span><span>3D Views</span><span>Motion Study 1</span>
      </div>
    </div>
    <aside class="task">
      <header><svg class="s12" viewBox="0 0 12 12"><path d="M5.500 1.500L1.500 6l4 4.500M10.500 1.500L6.500 6l4 4.500" fill="none" stroke="#111" stroke-width="1.700"/></svg><b>SOLIDWORKS Resources</b><svg class="s16"><use href="#gear"/></svg><svg class="s14" viewBox="0 0 20 20"><path d="M11 1l8 7-2.500 1L13 13l-.5 4.500-4-3.500L1 19l5-7.500L2.500 8 7 7.500l4-3.500z" fill="#111"/></svg></header>
      <div class="tbody">
        <div class="wel"><svg><use href="#home"/></svg>Welcome to SOLIDWORKS</div>
        <section class="t1"><h4>SOLIDWORKS Tools<svg><use href="#chev"/></svg></h4>
          <a><svg viewBox="0 0 20 20"><use href="#sw"/><text x="3" y="11.500" class="gl gw">S</text><use href="#page"/></svg>Property Tab Builder</a>
          <a><svg viewBox="0 0 20 20"><use href="#sw"/><text x="3" y="11" class="gl gw">S</text><use href="#sheet"/><text x="10.500" y="17.500" class="gl gk">Rx</text></svg>SOLIDWORKS Rx</a>
          <a><svg viewBox="0 0 20 20"><use href="#sw"/><text x="3" y="11" class="gl gw">S</text><use href="#sheet"/><text x="10.500" y="17.500" class="gl gk">Rx</text></svg>Performance Benchmark Test</a>
          <a><svg><use href="#score"/></svg>Compare My Score</a>
          <a><svg viewBox="0 0 20 20"><use href="#wizard"/><text x="8.600" y="16" class="gl gs">SW</text></svg>Copy Settings Wizard</a>
          <a><svg><use href="#myprod"/></svg>My Products</a></section>
        <section class="t2"><h4>Online Resources<svg><use href="#chev"/></svg></h4>
          <a><svg><use href="#compass"/></svg>3DEXPERIENCE Marketplace</a><a><svg><use href="#hands"/></svg>Partner Solutions</a></section>
        <section><h4>Subscription Services<svg><use href="#chev"/></svg></h4>
          <a><svg viewBox="0 0 20 20"><use href="#globe"/><text x="8.600" y="16" class="gl gs">SW</text></svg>Subscription Services</a></section>
      </div>
    </aside>
  </main>

  <footer class="status"><span>SOLIDWORKS Premium 2019 SP0.0</span><span>Length: 48mm</span><span>Under Defined</span><span class="bar">Editing Sketch12</span><svg class="s14"><use href="#light"/></svg><span class="bar mm">MMGS</span><svg class="ar flip"><use href="#arr"/></svg><svg class="s18"><use href="#tagp"/></svg></footer>
</div>
</body>
</html>
```
FILE: styles.css
```css
* { box-sizing: border-box; }
body { margin: 0; font: 11px/13px "Open Sans", "Noto Sans", sans-serif; color: #000; overflow: hidden; }
svg { display: block; width: 20px; height: 20px; flex: none; }
.defs { position: absolute; width: 0; height: 0; }
.s12 { width: 12px; height: 12px; }
.s14 { width: 14px; height: 14px; }
.s16 { width: 16px; height: 16px; }
.s18 { width: 18px; height: 18px; }
.ar { width: 7px; height: 4px; }
.flip { transform: scaleY(-1); }
h4 { margin: 0; font-size: 11px; line-height: 14px; font-weight: 700; color: #3c3c3c; display: flex; justify-content: space-between; align-items: center; letter-spacing: -.22px; }
h4 svg { width: 12px; height: 7px; }
.gl { font-family: "Liberation Sans", sans-serif; font-weight: 700; letter-spacing: 0; }
.gw { font-size: 7.500px; fill: #fff; }
.gs { font-size: 6px; fill: #fff; }
.gk { font-size: 6.500px; fill: #111; }
.ga { font-size: 12px; fill: #333; }
.bigA { font: 400 20px "Liberation Serif", serif; fill: #dcebf3; stroke: #2a7ba0; stroke-width: 1.200; }
.smA { font: 700 13px "Liberation Serif", serif; fill: #3d8fb5; }
.help { font: 700 11px "Open Sans", sans-serif; fill: #2a7ba0; }

.app { width: 1366px; height: 729px; display: flex; flex-direction: column; background: #f7f7f7; }

/* title bar */
.titlebar { position: relative; height: 31px; flex: none; display: flex; align-items: center; border-bottom: 1px solid #868686; padding-left: 183px; }
.logo { position: absolute; left: 10px; top: -1px; width: 145px; height: 36px; z-index: 2; border: 1px solid #999; background: linear-gradient(135deg, #fff 40%, #dcdcdc); display: flex; padding-left: 5px; }
.ds { width: 30px; height: 30px; fill: none; stroke: #d8232a; stroke-width: 2.600; stroke-linejoin: round; }
.word { color: #d8232a; font: italic 400 16.300px/20px "Open Sans", sans-serif; margin: 9px 0 0 3px; letter-spacing: -.2px; white-space: nowrap; }
.word b { font-weight: 800; }
.load { position: absolute; left: 563px; top: 0; width: 241px; height: 1px; background: linear-gradient(90deg, #0078d7 48px, #e2e2e2 48px); }
.menu { width: 404px; height: 30px; display: grid; align-items: center; grid-template-columns: 34px 36px 41px 44px 44px 71px 60px 50px 24px; border-right: 2px solid #999; padding-top: 1px; }
.qat { margin-left: 13px; display: grid; align-items: center; justify-items: center; grid-template-columns: 26px 24px 15px 24px 15px 24px 15px 24px 15px 24px 15px 39px 26px 26px 24px 15px; }
.pick { display: flex; width: 39px; height: 26px; border: 1px solid #777; align-items: center; }
.pick span { width: 25px; height: 24px; background: #b3b3b3; border-right: 1px solid #777; padding: 2px; }
.pick .ar { margin-left: 2px; }
.doc { width: 66px; padding: 1px 0 0 5px; white-space: nowrap; }
.search { width: 202px; height: 23px; border: 1px solid #111; background: #efeff3; display: grid; align-items: center; grid-template-columns: 21px 144px 22px 10px; padding-left: 5px; color: #666; }
.term { width: 15px; height: 15px; }
.win { display: grid; grid-template-columns: 34px 18px 21px 20px 30px 24px; align-items: center; justify-items: center; }
.q { font-size: 17px; color: #333; }

/* ribbon */
.ribbon { height: 86px; flex: none; padding: 6px 0 2px 6px; display: grid; grid-template-columns: 43px 68px 149px 49px 50px 48px 48px 176px 86px 45px 44px 45px 60px 58px; align-items: stretch; }
.btn { position: relative; display: flex; flex-direction: column; align-items: center; padding-top: 4px; text-align: center; white-space: nowrap; line-height: 13px; }
.btn span { padding-top: 1px; }
.btn.low { padding-top: 11px; }
.btn .dn { position: absolute; bottom: 9px; }
.btn.on { background: #b1b1b1; border: 1px solid #6e6e6e; }
.btn.low.on { padding-top: 10px; }
.exitbtn { display: flex; flex-direction: column; }
.exitbtn .btn { height: 59px; padding-top: 3px; }
.drop { flex: 1; border: 1px solid #999; border-top: 0; display: flex; justify-content: center; align-items: center; background: #fbfbfb; }
.sep { border-right: 1px solid #c0c0c0; }
.dis { color: #b5b5b5; }
.tools { display: grid; grid-template-columns: 28px 12px 28px 12px 28px 12px 28px; grid-template-rows: repeat(3, 26px); align-items: center; justify-items: center; }
.tools .ar { margin-right: 2px; }
.rows { display: grid; grid-template-columns: 26px 135px 12px; grid-template-rows: repeat(3, 26px); align-items: center; padding-left: 2px; letter-spacing: -.08px; }
.rows span { padding-bottom: 2px; }

/* main */
.main { display: flex; height: 592px; }
.left { width: 1115px; display: flex; flex-direction: column; }
.tabs { height: 23px; display: grid; grid-template-columns: 60px 55px 60px 107px 133px 73px 56px 123px 121px 145px 147px 35px; border-top: 1px solid #868686; color: #222; }
.tabs span { background: #d4d4d4; border-right: 1px solid #868686; border-bottom: 1px solid #868686; display: flex; align-items: center; justify-content: center; white-space: nowrap; letter-spacing: .18px; }
.tabs .act { background: #f7f7f7; font-weight: 700; color: #333; border-bottom-color: #f7f7f7; font-size: 11.500px; letter-spacing: .05px; }
.tabx { background: #f0f1f6; padding: 9px 0 0 10px; }
.tabx svg { width: 12px; height: 12px; }
.work { display: flex; height: 554px; }
.panel { width: 230px; border-right: 1px solid #777; padding-right: 2px; display: flex; flex-direction: column; background: #f7f7f7; }
.grip { height: 20px; border-top: 1px solid #8cabb5; border-bottom: 1px solid #b5b5b5; position: relative; display: flex; justify-content: center; align-items: center; padding: 4px 2px 0 0; }
.grip::before { content: ""; position: absolute; left: 0; right: 0; top: 3px; border-top: 1px solid #b5b5b5; }
.grip i { width: 6px; height: 6px; border-radius: 50%; border: 1px solid #888; background: #ccc; }
.ptabs { position: relative; margin-top: 4px; height: 26px; padding-left: 2px; display: grid; grid-template-columns: 40px 40px 40px 40px 40px 25px; border-right: 1px solid #aaa; }
.ptabs > span { background: #d4d4d4; border: 1px solid #868686; border-left: 0; display: flex; align-items: center; justify-content: center; }
.ptabs > .act { background: #f7f7f7; border-bottom-color: #f7f7f7; }
.ptabs > .cut { overflow: hidden; border-right: 0; }
.pscroll { position: absolute; right: 0; top: 7px; width: 36px; height: 19px; display: flex; }
.pscroll b { flex: 1; background: #f7f7f7; border: 1px solid #aaa; display: flex; align-items: center; justify-content: center; }
.pscroll svg { width: 5px; height: 7px; }
.phead { height: 63px; border: 1px solid #aaa; border-top: 0; padding: 5px 0 0 8px; display: grid; grid-template-columns: 25px 166px 16px; grid-template-rows: 22px 30px; align-items: center; }
.phead b { font-size: 11.500px; color: #222; letter-spacing: -.2px; }
.ok { width: 14px; height: 12px; margin-left: -1px; align-self: center; }
.pbody { flex: 1; display: flex; border: 1px solid #bbb; border-top: 0; margin-bottom: 2px; }
.groups { width: 208px; padding-left: 4px; height: 438px; overflow: hidden; }
.groups section { width: 200px; border-bottom: 1px solid #aaa; padding: 7px 2px 0 4px; }
.groups .g1 { height: 152px; padding-top: 9px; } .g2 { height: 110px; } .g3 { height: 78px; } .g4 { height: 94px; }
.rel { display: flex; padding: 6px 0 0 1px; gap: 8px; }
.rel svg { margin-top: 3px; }
.lb { width: 163px; height: 80px; border: 1px solid #6c7890; background: #fff; padding: 3px 2px; font-size: 10.500px; letter-spacing: .1px; }
.info { display: flex; align-items: center; gap: 7px; padding: 10px 0 0 2px; }
.opt { display: flex; align-items: center; gap: 5px; height: 24px; color: #555; }
.g2 h4 { margin-bottom: 5px; padding-top: 0; }
.opt i { width: 24px; height: 24px; border: 1px solid #999; padding: 1px; color: #222; background: #f7f7f7; }
.opt b { color: #333; letter-spacing: -.3px; }
.chk { height: 24px; display: flex; align-items: center; gap: 3px; padding-left: 29px; letter-spacing: .05px; }
.chk:first-of-type { margin-top: 1px; }
.chk i { width: 13px; height: 13px; border: 1px solid #222; background: #fff; }
.g4 h4 { margin-bottom: 1px; }
.num { display: flex; align-items: center; height: 32px; padding-left: 1px; }
.num span { margin-left: 8px; width: 138px; height: 22px; border: 1px solid #666; background: #fff; padding: 3px 5px; font-size: 10.500px; letter-spacing: .1px; }
.num em { margin-left: 5px; display: flex; flex-direction: column; gap: 6px; }
.num em svg, .sbar svg { width: 9px; height: 5px; }
.sbar { width: 15px; height: 438px; background: #ededed; display: flex; flex-direction: column; align-items: center; padding-top: 8px; }
.sbar i { width: 15px; height: 358px; background: #cdcdcd; margin: 5px 0 48px; }

/* graphics area */
.view { position: relative; width: 885px; height: 554px; background: radial-gradient(ellipse 620px 330px at 0 0, #fff 45%, rgba(255,255,255,0)), linear-gradient(180deg, #f3f4f8 0, #e6e8f1 12%, #dde0eb 28%, #dadeea 45%, #e3e6f0 55%, #f4f5f9 64%, #fff 72%, #fff 86%, #f4f6fa 100%); }
.model { position: absolute; left: 0; top: 0; width: 885px; height: 554px; }
.dt { font: 700 17px "Lato", sans-serif; fill: #111; stroke: #111; stroke-width: .25; }
.ax { font: 10px "Liberation Sans", sans-serif; }
.crumb { position: absolute; left: 5px; top: 5px; display: flex; align-items: center; letter-spacing: .3px; }
.crumb span { padding-top: 1px; }
.crumb .tri { width: 5px; height: 8px; margin-right: 12px; }
.crumb svg + svg { width: 19px; height: 19px; margin-right: 4px; }
.hud { position: absolute; left: 236px; top: 5px; display: grid; align-items: center; justify-items: center; grid-template-columns: 26px 26px 26px 26px 25px 28px 11px 30px 10px 30px 10px 30px 24px 12px 30px 10px 30px 24px; opacity: .85; }
.hud .ar { opacity: .65; }
.ctx { position: absolute; left: 404px; top: 173px; width: 282px; height: 68px; border: 1px solid #8e8e92; background: rgba(246,246,248,.77); display: grid; grid-template-columns: repeat(8, 30px); grid-template-rows: 30px 30px; align-items: center; justify-items: center; padding: 3px 0 0 3px; }
.bl { color: #2a7ba0; }
.handle { position: absolute; left: -1px; top: 246px; width: 9px; height: 39px; border: 1px solid #777; border-left: 0; background: #f7f7f7; display: flex; align-items: center; justify-content: center; }
.handle i { width: 6px; height: 6px; border: 1px solid #888; border-radius: 50%; background: #ccc; }
.tags { position: absolute; left: 608px; top: 519px; width: 249px; height: 50px; border: 4px solid #eaeaea; background: #fff; z-index: 2; display: flex; padding: 7px 4px 0 5px; font-size: 10.500px; }
.tags span { width: 38px; padding-top: 2px; }
.tags i { width: 194px; height: 30px; border: 1px solid #777; background: #efefef; }
.side { position: absolute; left: 862px; top: 28px; width: 26px; height: 192px; z-index: 2; border: 1px solid #868686; border-width: 1px 0 0 1px; }
.side span { height: 24px; background: #d4d4d4; border: 1px solid #868686; border-width: 0 1px 1px 0; display: flex; align-items: center; justify-content: center; }
.side .act { height: 23px; background: #f7f7f7; border-right-color: #f7f7f7; }

.btabs { height: 15px; display: flex; border-top: 1px solid #868686; }
.navs { width: 67px; background: #b3b3b6; display: flex; padding-left: 2px; border-right: 1px solid #777; }
.navs b { flex: 1; border: 1px solid #97979b; display: flex; align-items: center; justify-content: center; }
.navs svg { width: 9px; height: 9px; fill: #8a8a8e; }
.btabs span { line-height: 12px; display: flex; align-items: center; justify-content: center; background: #d4d4d4; border-right: 1px solid #868686; width: 109px; color: #222; padding: 0 9px 2px 0; letter-spacing: .1px; }
.btabs .act { background: #fbfbfb; width: 57px; font-weight: 700; font-size: 11.500px; color: #000; padding: 0 0 2px 2px; }
.btabs .act + span { width: 67px; padding: 0 0 2px; }

/* task pane */
.task { width: 251px; border: 1px solid #0a84f5; border-width: 0 0 2px 1px; box-shadow: inset 1px 0 #fff, inset 3px 0 #0a84f5; padding-left: 3px; }
.task header { height: 23px; background: #acadb1; border-top: 1px solid #868686; border-bottom: 2px solid #5c5c5e; display: grid; grid-template-columns: 35px 164px 21px 18px; align-items: center; padding-left: 9px; font-size: 11.500px; letter-spacing: .1px; white-space: nowrap; }
.tbody { padding: 27px 26px 0 14px; color: #555; }
.wel { height: 46px; display: flex; gap: 4px; color: #4c4c4c; line-height: 24px; }
.wel svg { margin-top: -1px; }
.tbody section { border-top: 1px solid #868686; padding-top: 4px; }
.tbody h4 { padding: 0 7px 0 3px; margin-bottom: 4px; line-height: 15px; }
.tbody a { height: 28px; display: flex; align-items: center; gap: 4px; white-space: nowrap; padding-left: 2px; letter-spacing: -.07px; }
.tbody a svg { margin-top: -5px; }
.t1 { height: 215px; } .t2 { height: 103px; }

.status { height: 20px; flex: none; border-top: 1px solid #868686; border-bottom: 1px solid #26303c; display: grid; grid-template-columns: 881px 87px 86px 103px 31px 83px 15px 1fr; align-items: center; padding: 0 0 1px 1px; white-space: nowrap; letter-spacing: .1px; }
.status .bar { border-left: 1px solid #ccc; padding-left: 7px; height: 16px; line-height: 17px; }
.status .s14 { justify-self: center; margin-left: 10px; }
.status .mm { padding-left: 31px; }
.status .s18 { justify-self: end; margin-right: 3px; }
```
